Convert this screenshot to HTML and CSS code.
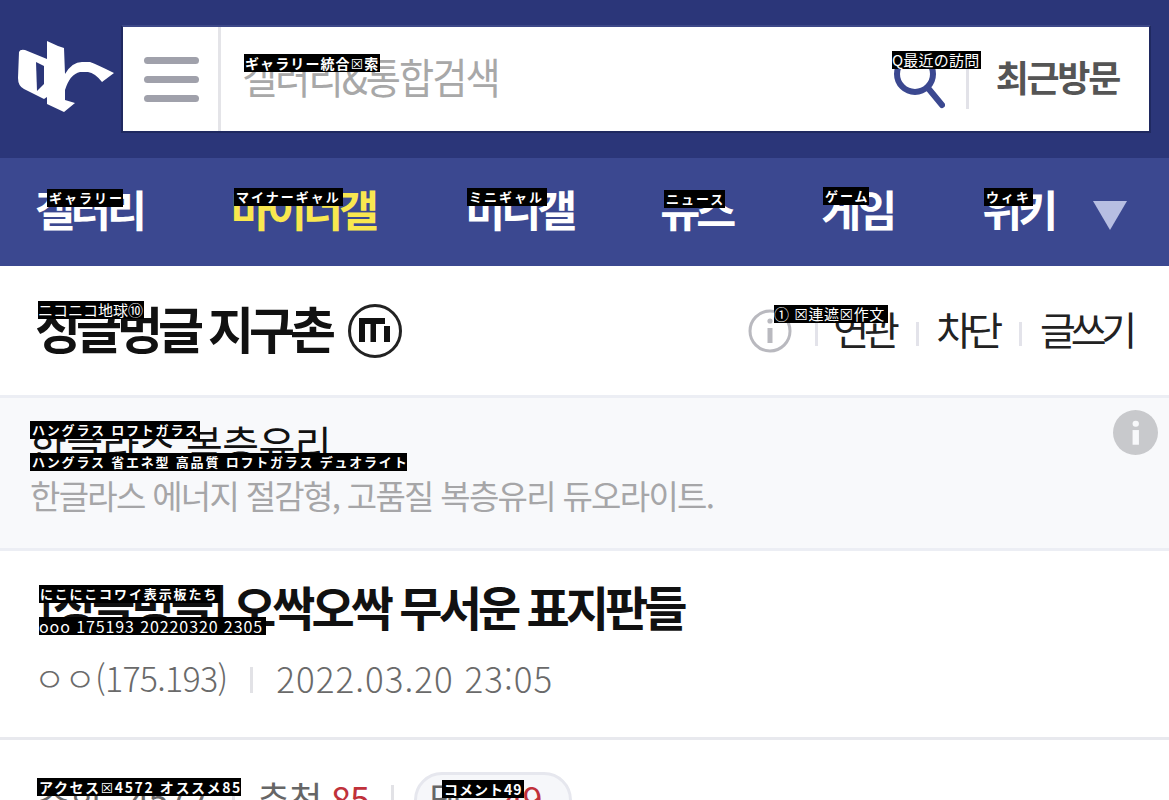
FILE: index.html
```html
<!DOCTYPE html>
<html lang="ko">
<head>
<meta charset="utf-8">
<title>싱글벙글 지구촌</title>
<link rel="stylesheet" href="styles.css">
</head>
<body>
<div class="page">
  <header class="top">
    <svg class="logo" viewBox="17 40 98 73" aria-label="dc">
      <path class="logo-w" d="M19 52 Q20 49 25 50 L47 59 L47 41 L58 46 L64 48 L65 74 Q72 62 82 62 L90 62 Q98 65 114 73 L102 82 Q95 73 88 72 L80 72 Q70 74 65 90 L65 100 L75 103 L64 112 L47 104 L47 97 L44 99 L24 89 Q18 86 18 78 Z"/>
      <path class="logo-b" d="M36 62 L44 66 L44 84 L37 91 Z"/>
    </svg>
    <div class="search">
      <div class="burger"><i></i><i></i><i></i></div>
      <div class="placeholder"><span class="squeeze">갤러리&amp;통합검색</span></div>
      <svg class="glass" viewBox="0 0 54 59"><circle cx="24" cy="24" r="18"/><path d="M37 38 L51 55"/></svg>
      <span class="search-rule"></span>
      <div class="recent">최근방문</div>
    </div>
  </header>

  <nav class="nav">
    <a class="nav-item nav-1">갤러리</a>
    <a class="nav-item nav-2 active">마이너갤</a>
    <a class="nav-item nav-3">미니갤</a>
    <a class="nav-item nav-4">뉴스</a>
    <a class="nav-item nav-5">게임</a>
    <a class="nav-item nav-6">위키</a>
    <span class="caret"></span>
  </nav>

  <section class="gal-head">
    <h1 class="gal-title">싱글벙글 지구촌</h1>
    <svg class="m-badge" viewBox="0 0 54 54">
      <circle cx="27" cy="27" r="25.500"/>
      <path d="M11 14 H37 V20 H28 V38 H22.500 V20 H17 V38 H11 Z M36 22 H42 V38 H36 Z"/>
    </svg>
    <div class="gal-tools">
      <svg class="info-line" viewBox="0 0 44 44">
        <circle cx="22" cy="22" r="20"/>
        <path d="M22 19 V34"/>
        <circle class="dot" cx="22" cy="12" r="2.600"/>
      </svg>
      <span class="rule rule-a"></span>
      <a class="tool">연관</a>
      <span class="rule"></span>
      <a class="tool">차단</a>
      <span class="rule"></span>
      <a class="tool">글쓰기</a>
    </div>
  </section>

  <section class="ad">
    <div class="ad-title">한글라스 복층유리</div>
    <div class="ad-sub">한글라스 에너지 절감형, 고품질 복층유리 듀오라이트.</div>
    <svg class="info-fill" viewBox="0 0 46 46">
      <circle cx="23" cy="23" r="23"/>
      <rect x="20" y="11" width="6.500" height="6" rx="3"/>
      <rect x="20" y="20.500" width="6.500" height="15"/>
    </svg>
  </section>

  <section class="post">
    <h2 class="post-title">[싱글벙글] 오싹오싹 무서운 표지판들</h2>
    <div class="post-meta">
      <span class="writer">ㅇㅇ(175.193)</span>
      <span class="meta-rule"></span>
      <span class="date">2022.03.20 23:05</span>
    </div>
  </section>

  <section class="stats">
    <span class="views">조회 : 4572</span>
    <span class="stat-rule"></span>
    <span>추천 <b>85</b></span>
    <span class="stat-rule stat-rule-b"></span>
    <span class="pill">댓글 <b>49</b></span>
  </section>
</div>

<div class="tag tag-search">ギャラリー統合☒索</div>
<div class="tag tag-recent">Q最近の訪問</div>
<div class="tag kana tag-n1">ギャラリー</div>
<div class="tag kana tag-n2">マイナーギャル</div>
<div class="tag kana tag-n3">ミニギャル</div>
<div class="tag kana tag-n4">ニュース</div>
<div class="tag kana tag-n5">ゲーム</div>
<div class="tag kana tag-n6">ウィキ</div>
<div class="tag tag-gal">ニコニコ地球⑩</div>
<div class="tag tag-tools">① ☒連遮☒作文</div>
<div class="tag kana tag-ad1">ハングラス ロフトガラス</div>
<div class="tag kana tag-ad2">ハングラス 省エネ型 高品質 ロフトガラス デュオライト</div>
<div class="tag kana tag-post">にこにこコワイ表示板たち</div>
<div class="tag tag-date">ooo 175193 20220320 2305</div>
<div class="tag tag-stats">アクセス☒4572 オススメ85</div>
<div class="tag tag-cmt">コメント49</div>
</body>
</html>
```
FILE: styles.css
```css
* { box-sizing: border-box; }
html, body { margin: 0; padding: 0; }
body {
  position: relative;
  width: 1169px;
  height: 800px;
  overflow: hidden;
  background: #fff;
  font-family: "Noto Sans CJK KR", "Noto Sans", sans-serif;
  color: #111;
}
.page { display: flex; flex-direction: column; }

.top {
  height: 158px;
  background: #2b3679;
  display: flex;
  align-items: flex-start;
  padding: 25px 18px 0 17px;
}
.logo { width: 98px; height: 73px; margin-top: 15px; margin-right: 6px; flex: none; }
.logo-w { fill: #fff; }
.logo-b { fill: #2b3679; }
.search {
  flex: 1;
  height: 108px;
  background: #fff;
  border: 2px solid #1f2960;
  border-top-color: #3d4888;
  display: flex;
  align-items: center;
}
.burger {
  width: 98px;
  height: 100%;
  padding-left: 1px;
  border-right: 3px solid #e4e4e8;
  display: flex;
  flex-direction: column;
  justify-content: center;
  align-items: center;
  gap: 12px;
  flex: none;
}
.burger i { display: block; width: 55px; height: 7px; border-radius: 4px; background: #a0a1ab; }
.placeholder {
  flex: 1;
  margin-left: 21px;
  margin-bottom: 6px;
  font-size: 42px;
  letter-spacing: -2.1px;
  line-height: 56px;
  color: #a8a8a8;
}
.squeeze { display: inline-block; transform: scaleX(0.91); transform-origin: left center; }
.glass { width: 54px; height: 59px; margin-right: 21px; flex: none; }
.glass circle, .glass path { fill: none; stroke: #3b4890; stroke-width: 6; stroke-linecap: round; }
.search-rule { width: 3px; height: 48px; background: #e2e2e8; margin: 12px 27px 0 0; flex: none; }
.recent {
  font-size: 36px;
  font-weight: 700;
  letter-spacing: -2.3px;
  color: #555;
  margin-right: 30px;
  margin-bottom: 6px;
  line-height: 50px;
}

.nav {
  height: 108px;
  background: #3b4890;
  display: flex;
  align-items: center;
  color: #fff;
}
.nav-item {
  font-size: 43.5px;
  font-weight: 700;
  letter-spacing: -4px;
  line-height: 60px;
  margin-bottom: 6px;
  flex: none;
}
.nav-1 { margin-left: 35px; }
.nav-2 { margin-left: 88px; }
.nav-3 { margin-left: 90px; }
.nav-4 { margin-left: 87px; }
.nav-5 { margin-left: 89px; }
.nav-6 { margin-left: 89px; }
.active { color: #f9e74f; }
.caret {
  width: 0; height: 0;
  margin-left: 39px;
  margin-top: 6px;
  border-left: 17px solid transparent;
  border-right: 17px solid transparent;
  border-top: 29px solid #b7bee2;
}

.gal-head {
  height: 132px;
  display: flex;
  align-items: center;
  padding: 0 37px 0 35px;
  border-bottom: 3px solid #eceef4;
}
.gal-title {
  margin: 0 0 8px;
  font-size: 50px;
  font-weight: 700;
  letter-spacing: -5px;
  line-height: 66px;
  color: #111;
}
.m-badge { width: 54px; height: 54px; margin-left: 17px; }
.m-badge circle { fill: none; stroke: #222; stroke-width: 3; }
.m-badge path { fill: #111; }
.gal-tools { margin-left: auto; display: flex; align-items: center; }
.info-line { width: 44px; height: 44px; margin-right: 23px; }
.info-line circle { fill: none; stroke: #b9b9bf; stroke-width: 3; }
.info-line path { stroke: #b9b9bf; stroke-width: 5; fill: none; }
.info-line .dot { fill: #b9b9bf; stroke: none; }
.rule { width: 3px; height: 24px; background: #e3e3ea; margin: 6px 18px 0 21px; }
.rule-a { margin: 6px 15px 0 0; }
.tool {
  font-size: 39px;
  letter-spacing: -5.2px;
  line-height: 54px;
  margin-bottom: 6px;
  color: #222;
}

.ad {
  position: relative;
  height: 153px;
  background: #f8f9fb;
  border-bottom: 3px solid #eceef4;
  padding: 20px 30px 0;
}
.ad-title {
  font-size: 40px;
  letter-spacing: -0.5px;
  line-height: 50px;
  color: #111;
}
.ad-sub {
  font-size: 33px;
  letter-spacing: -1.7px;
  line-height: 46px;
  margin-top: 4px;
  color: #a6a6a8;
}
.info-fill { position: absolute; right: 11px; top: 12px; width: 45px; height: 45px; }
.info-fill circle { fill: #c8c9cc; }
.info-fill rect { fill: #f8f9fb; }

.post {
  height: 189px;
  border-bottom: 3px solid #e8e9ee;
  padding: 23px 39px 0;
}
.post-title {
  margin: 0;
  font-size: 47px;
  font-weight: 700;
  letter-spacing: -3.95px;
  line-height: 64px;
  color: #111;
}
.post-meta {
  display: flex;
  align-items: center;
  margin: 16px 0 0 -5px;
  font-size: 34px;
  font-weight: 300;
  line-height: 48px;
  color: #6a6a6a;
}
.writer { letter-spacing: -0.75px; }
.date { font-size: 35px; letter-spacing: 1px; }
.meta-rule { width: 3px; height: 26px; background: #e2e2e6; margin: 4px 23px 0; }

.stats {
  display: flex;
  align-items: flex-start;
  padding: 32px 0 0 37px;
  font-size: 36px;
  letter-spacing: -0.8px;
  line-height: 50px;
  color: #666;
}
.stats b { font-weight: 400; color: #c0313a; }
.stat-rule { width: 3px; height: 24px; background: #e2e2e6; margin: 13px 22px 0; }
.stat-rule-b { margin-right: 20px; }
.views { width: 170px; margin-right: 3px; white-space: nowrap; }
.pill {
  width: 158px;
  height: 56px;
  border: 3px solid #e6e7ee;
  border-radius: 28px;
  background: #f6f7fa;
  padding-left: 12px;
  line-height: 44px;
  white-space: nowrap;
}

.tag {
  position: absolute;
  height: 18px;
  background: #000;
  color: #fff;
  font-family: "Noto Sans CJK JP", "DejaVu Sans", sans-serif;
  font-size: 15px;
  line-height: 18px;
  white-space: nowrap;
  overflow: hidden;
}
.kana { font-size: 13px; font-weight: 700; letter-spacing: 2px; padding-left: 2px; }
.tag-search { left: 244px; top: 54px; width: 136px; font-size: 14px; font-weight: 700; letter-spacing: 1.1px; padding-left: 1px; }
.tag-recent { left: 892px; top: 51px; width: 89px; letter-spacing: 0.2px; }
.tag-n1 { left: 47px; top: 189px; width: 76px; }
.tag-n2 { left: 234px; top: 188px; width: 109px; }
.tag-n3 { left: 467px; top: 188px; width: 80px; }
.tag-n4 { left: 664px; top: 190px; width: 61px; }
.tag-n5 { left: 823px; top: 187px; width: 46px; }
.tag-n6 { left: 984px; top: 188px; width: 49px; }
.tag-gal { left: 38px; top: 301px; width: 106px; }
.tag-tools { left: 774px; top: 305px; width: 114px; letter-spacing: 0.6px; }
.tag-ad1 { left: 30px; top: 421px; width: 170px; letter-spacing: 1.8px; }
.tag-ad2 { left: 30px; top: 453px; width: 377px; letter-spacing: 1.8px; }
.tag-post { left: 39px; top: 585px; width: 181px; letter-spacing: 1.9px; padding-left: 1px; }
.tag-date { left: 39px; top: 617px; width: 227px; font-size: 16px; letter-spacing: 0.9px; }
.tag-stats { left: 37px; top: 778px; width: 204px; font-size: 14px; font-weight: 700; letter-spacing: 1.6px; padding-left: 2px; }
.tag-cmt { left: 442px; top: 780px; width: 82px; font-size: 14px; font-weight: 700; letter-spacing: 1px; padding-left: 2px; }
```
